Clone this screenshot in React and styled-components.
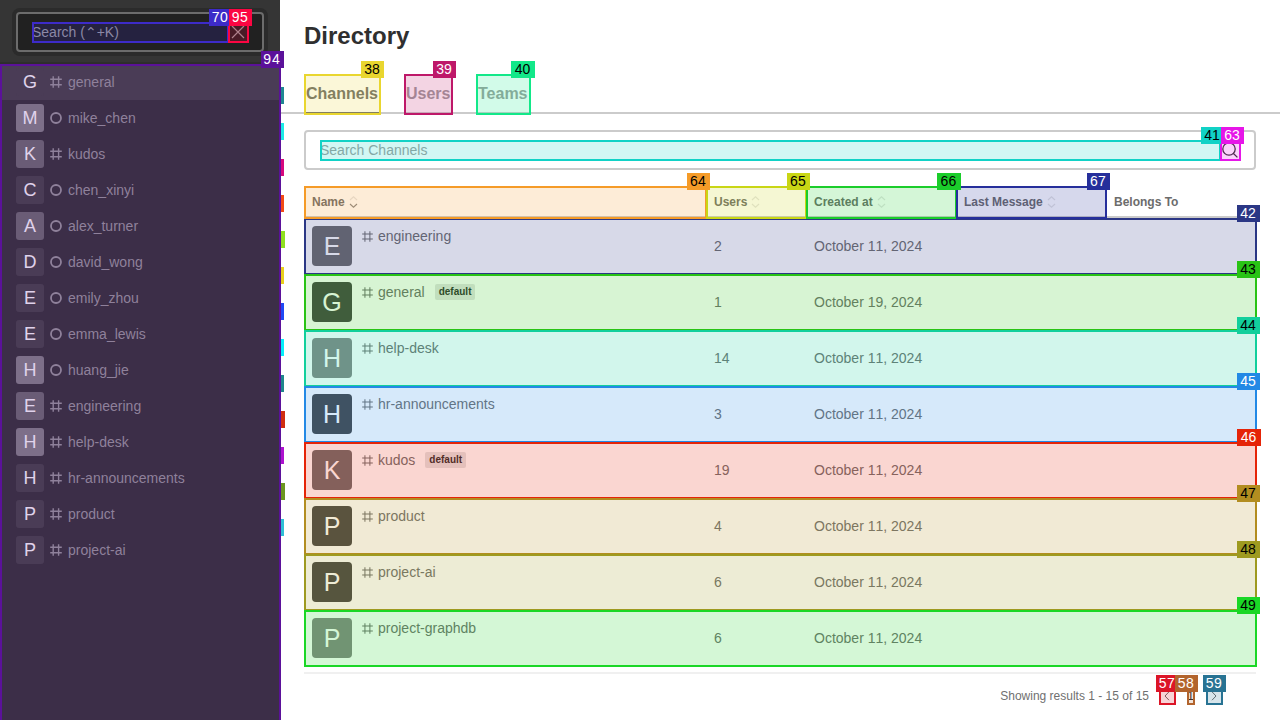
import React from 'react';
import styled, { createGlobalStyle } from 'styled-components';

const Global = createGlobalStyle`
  *, *::before, *::after { box-sizing: border-box; }
  html, body, #root { height: 100%; }
  body {
    margin: 0;
    overflow: hidden;
    background: #fff;
    color: #707070;
    font: 14px/20px "Liberation Sans", Arial, "DejaVu Sans", sans-serif;
  }
`;

/* numbered highlight laid over an element */
const Outline = styled.span`
  position: absolute;
  inset: 0 -1px ${(p) => p.$bottom ?? -1}px 0;
  z-index: ${(p) => p.$level || 'auto'};
  border: 2px solid ${(p) => p.$color};
  pointer-events: none;
  &::before {
    content: '';
    position: absolute;
    inset: 0;
    background: ${(p) => p.$color};
    opacity: 0.19;
  }
`;
const Label = styled.span`
  position: absolute;
  top: -13px;
  right: ${(p) => (p.$wide ? -5 : -4)}px;
  z-index: 3;
  width: ${(p) => (p.$wide ? 24 : 23)}px;
  height: 17px;
  padding-right: 1px;
  background: ${(p) => p.$color};
  color: ${(p) => (p.$light ? '#fff' : '#000')};
  font-size: 14px;
  font-weight: 400;
  line-height: 16px;
  letter-spacing: ${(p) => p.$spacing || 0}px;
  text-align: center;
`;
const Mark = ({ n, color, light, level, spacing, wide, bottom }) => (
  <>
    <Outline $color={color} $level={level} $bottom={bottom} />
    <Label $color={color} $light={light} $spacing={spacing} $wide={wide}>{n}</Label>
  </>
);

const Page = styled.div`
  display: flex;
  width: 1280px;
  height: 720px;
`;
const Sidebar = styled.aside`
  display: flex;
  flex-direction: column;
  flex: 0 0 280px;
  background: #353535;
`;
const SidebarHeader = styled.div`
  height: 64px;
  padding: 12px 16px;
  border-bottom: 2px solid #2e2e2e;
`;
const SidebarSearch = styled.div`
  display: flex;
  height: 40px;
  padding: 8px 14px;
  border: 2px solid #6c6c6c;
  border-radius: 4px;
  background: #212121;
  box-shadow: 0 0 0 4px #2b2b2b;
`;
const Field = styled.div`
  position: relative;
  flex: 1;
  height: 20px;
  color: ${(p) => p.$color};
  white-space: nowrap;
`;
const IconSlot = styled.div`
  position: relative;
  display: flex;
  align-items: center;
  justify-content: center;
  width: 20px;
  height: 20px;
`;
const RoomList = styled.div`
  position: relative;
  flex: 1;
`;
const RoomRow = styled.div`
  position: relative;
  display: flex;
  align-items: center;
  height: 36px;
  padding-left: 16px;
  background: ${(p) => (p.$active ? '#474747' : 'transparent')};
  color: #9c9c9c;
  svg { margin: 0 6px; }
`;
const RoomAvatar = styled.div`
  width: 28px;
  height: 28px;
  border-radius: 3px;
  background: ${(p) => p.$bg};
  color: #fff;
  font-size: 18px;
  line-height: 28px;
  text-align: center;
`;
const EdgeTab = styled.span`
  position: absolute;
  top: -13px;
  left: 281px;
  width: ${(p) => p.$reach}px;
  height: 17px;
  background: ${(p) => p.$color};
`;
const ListCover = styled.span`
  position: absolute;
  inset: 0 -1px 0 0;
  border: 2px solid #5b119a;
  border-bottom: 0;
  &::before {
    content: '';
    position: absolute;
    inset: 0;
    background: #5b119a;
    opacity: 0.19;
  }
`;

const Main = styled.main`
  flex: 1;
  min-width: 0;
`;
const Title = styled.h1`
  margin: 0;
  padding: 20px 24px 0;
  height: 74px;
  color: #2f2f2f;
  font-size: 24px;
  line-height: 32px;
`;
const Tabs = styled.nav`
  display: flex;
  gap: 24px;
  height: 40px;
  padding-left: 24px;
  border-bottom: 2px solid #cbcbcb;
`;
const Tab = styled.div`
  position: relative;
  width: ${(p) => p.$width}px;
  height: 40px;
  padding: 0 2px;
  border-bottom: 2px solid ${(p) => (p.$active ? '#6c6c6c' : 'transparent')};
  color: ${(p) => (p.$active ? '#6c6c6c' : '#9e9e9e')};
  font-size: 16px;
  font-weight: 700;
  line-height: 39px;
`;
const Content = styled.section`
  padding: 16px 24px 0;
`;
const SearchBox = styled.div`
  display: flex;
  height: 40px;
  margin-bottom: 16px;
  padding: 8px 14px;
  border: 2px solid #cbcbcb;
  border-radius: 4px;
`;
const grid = `
  display: grid;
  grid-template-columns: 402px 100px 150px 150px 150px;
`;
const HeadRow = styled.div`
  ${grid}
  height: 32px;
  border-bottom: 2px solid #cbcbcb;
`;
const HeadCell = styled.div`
  position: relative;
  display: flex;
  align-items: center;
  gap: 4px;
  height: 32px;
  padding-left: 8px;
  color: #6c6c6c;
  font-size: 12px;
  font-weight: 700;
`;
const Row = styled.div`
  ${grid}
  position: relative;
  height: 56px;
  align-items: center;
`;
const Cell = styled.div`
  padding-left: 8px;
  font-kerning: none;
`;
const NameCell = styled(Cell)`
  display: flex;
  align-items: flex-start;
  svg { margin: 5px 5px 0 10px; }
`;
const Avatar = styled.div`
  width: 40px;
  height: 40px;
  border-radius: 4px;
  background: ${(p) => p.$bg};
  color: #fff;
  font-size: 25px;
  line-height: 40px;
  text-align: center;
`;
const Tag = styled.span`
  height: 16px;
  margin: 2px 0 0 10px;
  padding: 0 4px;
  border-radius: 2px;
  background: #e4e4e4;
  color: #2f2f2f;
  font-size: 10px;
  font-weight: 700;
  line-height: 15px;
`;
const Footer = styled.footer`
  display: flex;
  align-items: flex-start;
  justify-content: flex-end;
  height: 48px;
  margin-top: 6px;
  padding: 14px 34px 0 0;
  border-top: 2px solid #f0f0f0;
  font-size: 12px;
  line-height: 16px;
`;
const Summary = styled.span`
  margin-right: 10px;
`;
const PageButton = styled.div`
  position: relative;
  display: flex;
  align-items: center;
  justify-content: center;
  width: ${(p) => p.$width || 16}px;
  height: 16px;
  margin-right: ${(p) => p.$after || 0}px;
  color: ${(p) => (p.$current ? '#1f2329' : '#6c6c6c')};
`;

const Hash = ({ size = 11, w = 1.1 }) => (
  <svg width={size} height={size} viewBox="0 0 12 12" fill="none" stroke="currentColor" strokeWidth={w}>
    <path d="M3.2 .2v11.6M8.6 .2v11.6M.2 3.2h11.6M.2 8.8h11.6" />
  </svg>
);
const Circle = () => (
  <svg width="12" height="12" viewBox="0 0 12 12" fill="none" stroke="currentColor" strokeWidth="1.8">
    <circle cx="6" cy="6" r="5" />
  </svg>
);
const Sort = ({ active }) => (
  <svg width="9" height="12" viewBox="0 0 9 12" fill="none" stroke="#6c6c6c" strokeWidth="1.1">
    <path d="M1 4 4.5 .8 8 4" opacity=".18" />
    <path d="M1 8 4.5 11.2 8 8" opacity={active ? 0.8 : 0.18} />
  </svg>
);

const rooms = [
  ['general', 'hash', '#474747'],
  ['mike_chen', 'user', '#858585', '#1f8793', 3],
  ['kudos', 'hash', '#6e6e6e', '#1de9e7', 3],
  ['chen_xinyi', 'user', '#474747', '#d6087e', 3],
  ['alex_turner', 'user', '#6e6e6e', '#f24a16', 3],
  ['david_wong', 'user', '#474747', '#8fe01f', 4],
  ['emily_zhou', 'user', '#474747', '#e8cf1d', 3],
  ['emma_lewis', 'user', '#474747', '#2048f5', 3],
  ['huang_jie', 'user', '#858585', '#06eefb', 3],
  ['engineering', 'hash', '#6e6e6e', '#1f868c', 3],
  ['help-desk', 'hash', '#858585', '#d02d10', 4],
  ['hr-announcements', 'hash', '#474747', '#ae12cf', 3],
  ['product', 'hash', '#474747', '#6c9620', 4],
  ['project-ai', 'hash', '#474747', '#2fbfd6', 3],
];

const columns = [
  ['Name', 64, '#f59b28'],
  ['Users', 65, '#c9d615'],
  ['Created at', 66, '#1bcd2b'],
  ['Last Message', 67, '#262f9b', true],
  ['Belongs To'],
];

const channels = [
  ['engineering', 2, 'October 11, 2024', '#6e6e6e', 42, '#2b3785', true],
  ['general', 1, 'October 19, 2024', '#464646', 43, '#29c315', false, true],
  ['help-desk', 14, 'October 11, 2024', '#858585', 44, '#12cf9c', false],
  ['hr-announcements', 3, 'October 11, 2024', '#464646', 45, '#2389e5', true],
  ['kudos', 19, 'October 11, 2024', '#6e6e6e', 46, '#e52408', true, true],
  ['product', 4, 'October 11, 2024', '#464646', 47, '#b28d20', false],
  ['project-ai', 6, 'October 11, 2024', '#464646', 48, '#9e9a20', false],
  ['project-graphdb', 6, 'October 11, 2024', '#858585', 49, '#1ad726', false],
];

export default function App() {
  return (
    <Page>
      <Global />
      <Sidebar>
        <SidebarHeader>
          <SidebarSearch>
            <Field $color="#9e9e9e">Search (⌃+K)<Mark n={70} color="#3d2bc9" light spacing={0.4} /></Field>
            <IconSlot>
              <svg width="14" height="14" viewBox="0 0 14 14" stroke="#9e9e9e" strokeWidth="1.2">
                <path d="M1 1 13 13M13 1 1 13" />
              </svg>
              <Mark n={95} color="#fb0642" light spacing={0.4} />
            </IconSlot>
          </SidebarSearch>
        </SidebarHeader>
        <RoomList>
          {rooms.map(([name, kind, bg, tab, reach], i) => (
            <RoomRow key={name} $active={i === 0}>
              <RoomAvatar $bg={bg}>{name[0].toUpperCase()}</RoomAvatar>
              {kind === 'hash' ? <Hash size={12} w={1.4} /> : <Circle />}
              {name}
              {tab && <EdgeTab $color={tab} $reach={reach} />}
            </RoomRow>
          ))}
          <ListCover />
          <Label $color="#5b119a" $light $spacing={1}>94</Label>
        </RoomList>
      </Sidebar>
      <Main>
        <Title>Directory</Title>
        <Tabs>
          <Tab $width={76} $active>Channels<Mark n={38} color="#e9d62f" bottom={-3} /></Tab>
          <Tab $width={48}>Users<Mark n={39} color="#be1869" light bottom={-3} /></Tab>
          <Tab $width={54}>Teams<Mark n={40} color="#12e889" wide bottom={-3} /></Tab>
        </Tabs>
        <Content>
          <SearchBox>
            <Field $color="#9e9e9e">Search Channels<Mark n={41} color="#11d2c6" /></Field>
            <IconSlot>
              <svg width="16" height="16" viewBox="0 0 16 16" fill="none" stroke="#2f2f2f" strokeWidth="1.3">
                <circle cx="7" cy="7" r="6.2" />
                <path d="m11.2 11.2 4.2 4.2" />
              </svg>
              <Mark n={63} color="#e616e8" light />
            </IconSlot>
          </SearchBox>
          <HeadRow>
            {columns.map(([title, n, color, light], i) => (
              <HeadCell key={title}>
                {title}
                {n && <Sort active={i === 0} />}
                {n && <Mark n={n} color={color} light={light} level={1} spacing={0.3} wide={n === 66} />}
              </HeadCell>
            ))}
          </HeadRow>
          {channels.map(([name, users, created, bg, n, color, light, isDefault]) => (
            <Row key={name}>
              <NameCell>
                <Avatar $bg={bg}>{name[0].toUpperCase()}</Avatar>
                <Hash />
                {name}
                {isDefault && <Tag>default</Tag>}
              </NameCell>
              <Cell>{users}</Cell>
              <Cell>{created}</Cell>
              <Mark n={n} color={color} light={light} wide={n === 46} />
            </Row>
          ))}
          <Footer>
            <Summary>Showing results 1 - 15 of 15</Summary>
            <PageButton $after={12}>
              <svg width="6" height="10" viewBox="0 0 6 10" fill="none" stroke="currentColor"><path d="M5 .8 1 5l4 4.2" /></svg>
              <Mark n={57} color="#dc1527" light spacing={0.4} />
            </PageButton>
            <PageButton $width={7} $after={12} $current>1<Mark n={58} color="#b2642d" light spacing={0.4} /></PageButton>
            <PageButton>
              <svg width="6" height="10" viewBox="0 0 6 10" fill="none" stroke="currentColor"><path d="m1 .8 4 4.2-4 4.2" /></svg>
              <Mark n={59} color="#287393" light spacing={0.4} />
            </PageButton>
          </Footer>
        </Content>
      </Main>
    </Page>
  );
}
